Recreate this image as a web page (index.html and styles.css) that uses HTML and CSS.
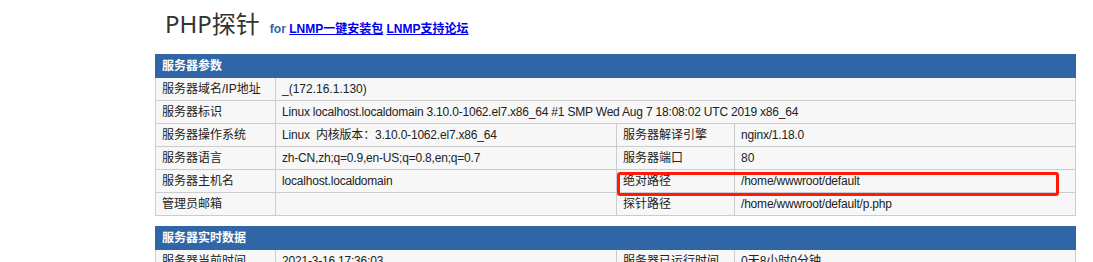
FILE: index.html
```html
<!DOCTYPE html>
<html lang="zh-CN">
<head>
<meta charset="utf-8">
<title>PHP探针</title>
<link rel="stylesheet" href="styles.css">
</head>
<body>
<div class="page">
  <div class="header">
    <h1 class="title">PHP探针</h1>
    <span class="links">for <a href="#">LNMP一键安装包</a> <a href="#">LNMP支持论坛</a></span>
  </div>
  <div class="tablewrap">
    <table class="info">
      <colgroup><col class="c1"><col class="c2"><col class="c3"><col class="c4"></colgroup>
      <tr><th colspan="4">服务器参数</th></tr>
      <tr><td>服务器域名/IP地址</td><td colspan="3">_(172.16.1.130)</td></tr>
      <tr><td>服务器标识</td><td colspan="3" class="latin">Linux localhost.localdomain 3.10.0-1062.el7.x86_64 #1 SMP Wed Aug 7 18:08:02 UTC 2019 x86_64</td></tr>
      <tr><td>服务器操作系统</td><td class="latin">Linux &nbsp;内核版本：3.10.0-1062.el7.x86_64</td><td>服务器解译引擎</td><td class="latin">nginx/1.18.0</td></tr>
      <tr><td>服务器语言</td><td class="latin">zh-CN,zh;q=0.9,en-US;q=0.8,en;q=0.7</td><td>服务器端口</td><td>80</td></tr>
      <tr><td>服务器主机名</td><td class="latin">localhost.localdomain</td><td>绝对路径</td><td class="latin">/home/wwwroot/default</td></tr>
      <tr><td>管理员邮箱</td><td></td><td>探针路径</td><td class="latin">/home/wwwroot/default/p.php</td></tr>
    </table>
    <div class="highlight"></div>
  </div>
  <table class="info">
    <colgroup><col class="c1"><col class="c2"><col class="c3"><col class="c4"></colgroup>
    <tr><th colspan="4">服务器实时数据</th></tr>
    <tr><td>服务器当前时间</td><td class="latin">2021-3-16 17:36:03</td><td>服务器已运行时间</td><td>0天8小时0分钟</td></tr>
  </table>
</div>
</body>
</html>
```
FILE: styles.css
```css
html, body {
  margin: 0;
  padding: 0;
  background: #fff;
}
body {
  font-family: "Liberation Sans", "Noto Sans CJK SC", sans-serif;
  font-size: 12px;
  color: #222;
}
.page {
  width: 920px;
  margin-left: 155px;
}
.header {
  display: flex;
  align-items: baseline;
  gap: 10px;
  padding: 10px 10px 16px;
}
.title {
  margin: 0;
  font-family: "Noto Sans", "Noto Sans CJK SC", sans-serif;
  font-weight: normal;
  font-size: 24px;
  line-height: 28px;
  color: #333;
}
.links {
  font-family: "Liberation Sans", "Noto Sans CJK SC", sans-serif;
  font-size: 12px;
  font-weight: bold;
  color: #3066a6;
}
.links a {
  color: #0000ee;
}
.tablewrap {
  position: relative;
}
.info {
  width: 920px;
  border-collapse: collapse;
  border-spacing: 0;
  table-layout: fixed;
  margin: 0 0 10px;
}
.c1 { width: 120px; }
.c2 { width: 341px; }
.c3 { width: 118px; }
.c4 { width: 341px; }
.info th {
  padding: 3px 6px;
  line-height: 16px;
  font-weight: bold;
  background: #3066a6;
  color: #fff;
  border: 1px solid #3066a6;
  text-align: left;
}
.info tr {
  background: #f7f7f7;
}
.info td {
  padding: 3px 6px;
  line-height: 16px;
  border: 1px solid #ccc;
  white-space: nowrap;
  overflow: hidden;
}
.info td.latin {
  letter-spacing: -0.2px;
}
.highlight {
  position: absolute;
  left: 462px;
  top: 118px;
  width: 436px;
  height: 18px;
  border: 3px solid #ff1a0a;
  border-radius: 3px;
}
```
